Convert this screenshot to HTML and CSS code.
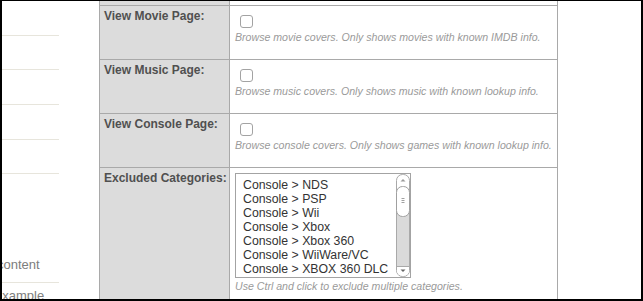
FILE: index.html
```html
<!DOCTYPE html>
<html>
<head>
<meta charset="utf-8">
<link rel="stylesheet" href="styles.css">
</head>
<body>
<div class="frame">
  <aside class="sidebar">
    <div class="nav-item h34"></div>
    <div class="nav-item h33"></div>
    <div class="nav-item h34"></div>
    <div class="nav-item h34"></div>
    <div class="nav-item h33"></div>
    <div class="nav-item tall"><span class="nav-text">content</span></div>
    <div class="nav-item last"><span class="nav-text shift">example</span></div>
  </aside>
  <div class="settings">
    <div class="row row-top">
      <div class="label"></div>
      <div class="value"></div>
    </div>
    <div class="row">
      <div class="label">View Movie Page:</div>
      <div class="value">
        <input type="checkbox" class="check">
        <p class="hint">Browse movie covers. Only shows movies with known IMDB info.</p>
      </div>
    </div>
    <div class="row">
      <div class="label">View Music Page:</div>
      <div class="value">
        <input type="checkbox" class="check">
        <p class="hint">Browse music covers. Only shows music with known lookup info.</p>
      </div>
    </div>
    <div class="row">
      <div class="label">View Console Page:</div>
      <div class="value">
        <input type="checkbox" class="check">
        <p class="hint">Browse console covers. Only shows games with known lookup info.</p>
      </div>
    </div>
    <div class="row row-tall">
      <div class="label">Excluded Categories:</div>
      <div class="value">
        <div class="listbox">
          <div class="options">
            <div class="option">Console &gt; NDS</div>
            <div class="option">Console &gt; PSP</div>
            <div class="option">Console &gt; Wii</div>
            <div class="option">Console &gt; Xbox</div>
            <div class="option">Console &gt; Xbox 360</div>
            <div class="option">Console &gt; WiiWare/VC</div>
            <div class="option">Console &gt; XBOX 360 DLC</div>
          </div>
          <svg class="scrollbar" width="14" height="103" viewBox="0 0 14 103">
            <rect x="0.5" y="0.5" width="13" height="102" rx="6" fill="#ffffff" stroke="#a9a9a9"/>
            <rect x="1" y="20" width="12" height="73" fill="#dadada"/>
            <rect x="0.5" y="12.5" width="13" height="30" rx="6" fill="#ffffff" stroke="#a0a0a0"/>
            <path d="M5.5 24.5h3M5.5 26.5h3M5.5 28.5h3" stroke="#a0a0a0" stroke-width="1" fill="none"/>
            <path d="M4.5 7.5L7 5L9.5 7.5Z" fill="#9a9a9a"/>
            <rect x="1" y="92.5" width="12" height="9" rx="5" fill="#ffffff"/>
            <path d="M1 92.5h12" stroke="#a9a9a9" stroke-width="1"/>
            <path d="M4.5 95.5L7 98L9.5 95.5Z" fill="#666666"/>
          </svg>
        </div>
        <p class="hint hint-after">Use Ctrl and click to exclude multiple categories.</p>
      </div>
    </div>
  </div>
</div>
</body>
</html>
```

FILE: styles.css
```css
html, body {
  margin: 0;
  padding: 0;
  background: #ffffff;
}

.frame {
  width: 643px;
  height: 301px;
  box-sizing: border-box;
  border-style: solid;
  border-color: #000000;
  border-width: 1px 2px 2px 2px;
  display: flex;
  align-items: flex-start;
  overflow: hidden;
  background: #ffffff;
  font-family: "Liberation Sans", Arial, sans-serif;
}

.sidebar {
  width: 57px;
  flex: none;
  overflow: hidden;
}

.nav-item {
  border-bottom: 1px solid #e7e5dc;
  box-sizing: content-box;
}

.h34 { height: 34px; }
.h33 { height: 33px; }

.tall {
  height: 98px;
  padding-bottom: 10px;
  display: flex;
  align-items: flex-end;
}

.last {
  border-bottom: none;
  padding-top: 5px;
  height: 40px;
}

.nav-text {
  display: block;
  font-size: 13px;
  line-height: 15px;
  color: #7d7d7d;
  margin-left: -5px;
  white-space: nowrap;
}

.nav-text.shift {
  margin-left: -7px;
}

.settings {
  width: 459px;
  flex: none;
  margin-left: 40px;
  box-sizing: border-box;
  border-left: 1px solid #a9a9a9;
  border-right: 1px solid #a9a9a9;
}

.row {
  display: flex;
  min-height: 53px;
  border-bottom: 1px solid #a9a9a9;
}

.row-top {
  min-height: 4px;
  height: 4px;
}

.row-tall {
  min-height: 150px;
}

.label {
  width: 130px;
  flex: none;
  box-sizing: border-box;
  border-right: 1px solid #a9a9a9;
  background: #dcdcdc;
  padding: 3px 0 3px 4px;
  font-size: 12px;
  font-weight: bold;
  line-height: 14px;
  color: #505050;
  white-space: nowrap;
}

.value {
  flex: 1;
  padding: 5px;
}

.row-top .value,
.row-top .label {
  padding: 0;
}

.check {
  -webkit-appearance: none;
  appearance: none;
  display: block;
  width: 13px;
  height: 13px;
  box-sizing: border-box;
  margin: 4px 0 3px 5px;
  border: 1px solid #a3a3a3;
  border-radius: 3px;
  background: #ffffff;
}

.hint {
  margin: 0;
  font-size: 10.6px;
  font-style: italic;
  line-height: 13px;
  color: #9a9a9a;
  white-space: nowrap;
}

.hint-after {
  margin-top: 2px;
}

.listbox {
  width: 176px;
  height: 105px;
  box-sizing: border-box;
  border: 1px solid #a3a3a3;
  display: flex;
  background: #ffffff;
}

.options {
  flex: 1;
  padding: 4px 0 0 7px;
  font-size: 12.3px;
  line-height: 14px;
  color: #333333;
  white-space: nowrap;
  overflow: hidden;
}

.scrollbar {
  flex: none;
  display: block;
}
```
